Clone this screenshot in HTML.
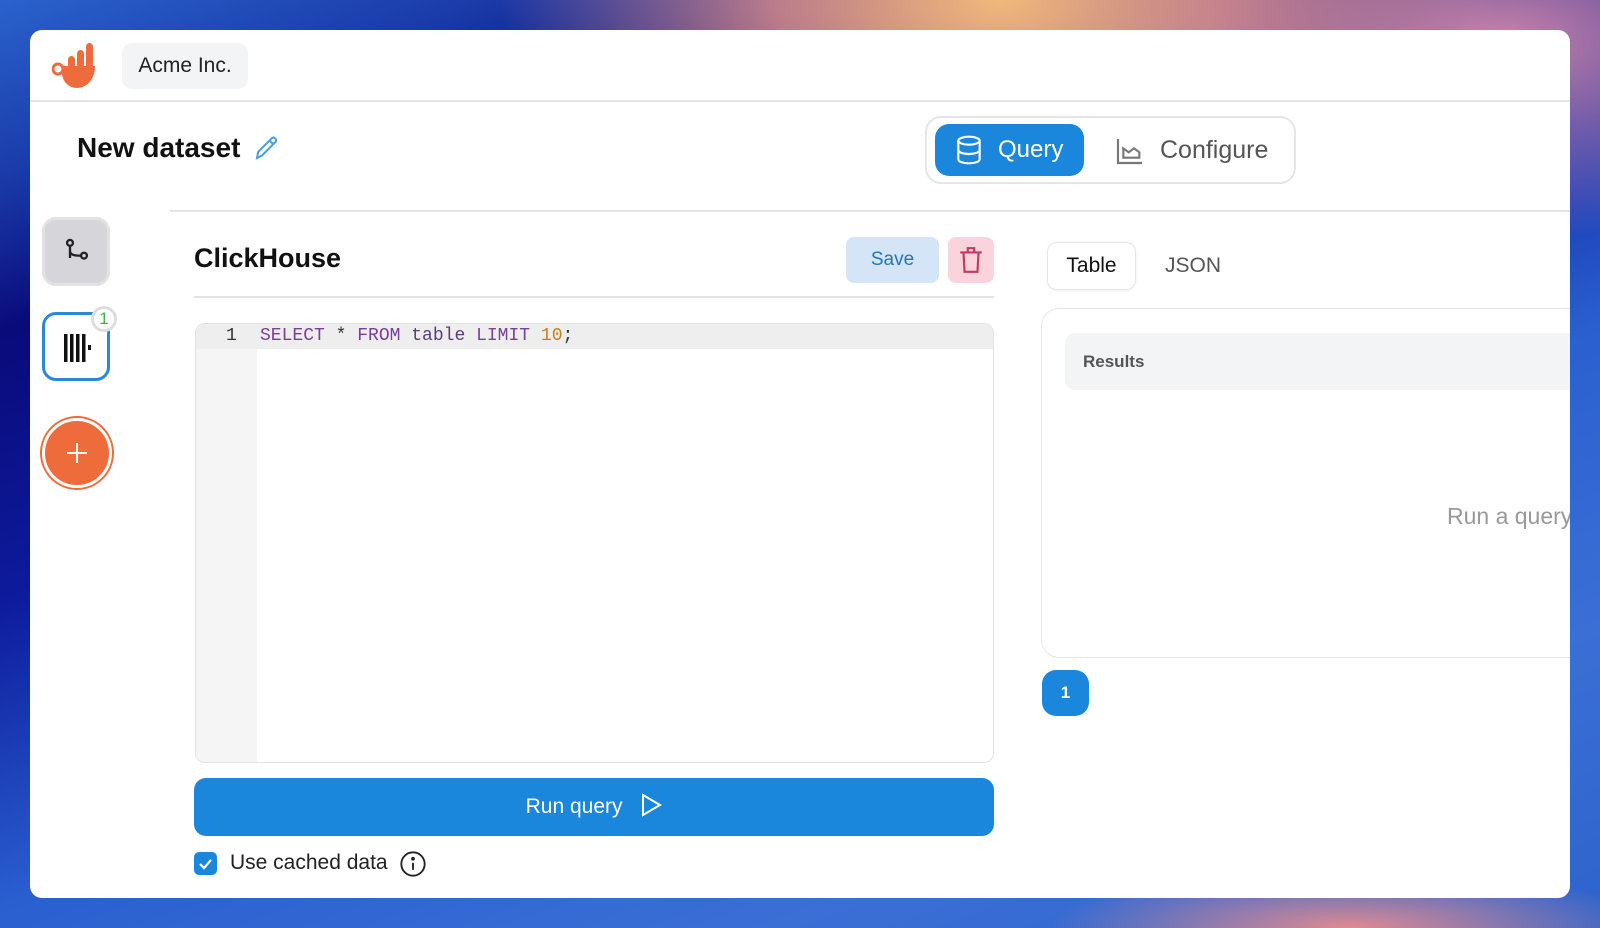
<!DOCTYPE html>
<html><head><meta charset="utf-8"><style>
*{box-sizing:border-box;margin:0;padding:0}
body{width:1600px;height:928px;overflow:hidden;position:relative;font-family:"Liberation Sans",sans-serif;
background:
radial-gradient(ellipse 500px 260px at 1000px 0px,#f1b97a 0%,rgba(230,150,140,.8) 45%,transparent 100%),
radial-gradient(ellipse 400px 200px at 1500px 40px,#c784a8 0%,transparent 100%),
radial-gradient(ellipse 300px 60px at 1350px 928px,#e08a90 0%,transparent 100%),
linear-gradient(160deg,#2a62cc 0%,#1a3aa8 12%,#0a0a7a 22%,#0d1b9c 40%,#2a5fd0 60%,#3b6fd6 80%,#2d63cc 100%);}
.win{position:absolute;left:30px;top:30px;width:1540px;height:868px;background:#fff;border-radius:12px;overflow:hidden}
.hdr{position:absolute;left:0;top:0;right:0;height:72px;border-bottom:2px solid #e5e5e7}
.pill{position:absolute;left:92px;top:13px;width:126px;height:46px;background:#f3f4f6;border-radius:10px;font-size:21px;line-height:46px;text-align:center;color:#222}
.title{position:absolute;left:47px;top:102px;font-size:28px;font-weight:bold;color:#111}
.seg{position:absolute;left:895px;top:86px;width:371px;height:68px;border:2px solid #e6e6e8;border-radius:16px}
.q{position:absolute;left:8px;top:6px;width:149px;height:52px;background:#1a86dc;border-radius:14px;color:#fff;font-size:24px;line-height:52px}
.cfg{position:absolute;left:183px;top:6px;height:52px;line-height:52px;font-size:25px;color:#555}
.hl{position:absolute;left:140px;top:180px;right:0;border-top:2px solid #e5e5e7}
.sb{position:absolute;left:12px;width:68px;height:69px;border-radius:14px}
.ch{position:absolute;left:164px;top:213px;font-size:27px;font-weight:bold;color:#111}
.save{position:absolute;left:816px;top:207px;width:93px;height:46px;background:#d3e5f7;border-radius:8px;color:#2675b8;font-size:19px;line-height:46px;text-align:center}
.trash{position:absolute;left:918px;top:207px;width:46px;height:46px;background:#fbd3dd;border-radius:8px}
.l2{position:absolute;left:164px;top:266px;width:800px;border-top:2px solid #e2e2e4}
.ed{position:absolute;left:165px;top:293px;width:799px;height:440px;border:1px solid #e2e2e4;border-radius:10px;overflow:hidden;background:#fff}
.gut{position:absolute;left:0;top:0;width:61px;height:100%;background:#f5f5f5}
.l1{position:absolute;left:0;top:0;width:100%;height:25px;background:#eeeeee;font-family:"Liberation Mono",monospace;font-size:18px;line-height:25px}
.run{position:absolute;left:164px;top:748px;width:800px;height:58px;background:#1a86dc;border-radius:12px;color:#fff;font-size:21px;text-align:center;line-height:58px}
.cb{position:absolute;left:164px;top:822px;width:23px;height:23px;background:#1a86dc;border-radius:5px}
.tab{position:absolute;left:1017px;top:212px;width:89px;height:48px;border:1px solid #e6e6e8;border-radius:10px;font-size:21px;line-height:46px;text-align:center;color:#111;box-shadow:0 1px 3px rgba(0,0,0,.06)}
.card{position:absolute;left:1011px;top:278px;width:600px;height:350px;border:1px solid #e6e6e8;border-radius:18px}
.rh{position:absolute;left:1035px;top:303px;width:600px;height:57px;background:#f3f4f6;border-radius:10px;font-size:17px;font-weight:bold;color:#555;line-height:57px;padding-left:18px}
.pg{position:absolute;left:1012px;top:640px;width:47px;height:46px;background:#1a86dc;border-radius:14px;color:#fff;font-size:17px;font-weight:bold;text-align:center;line-height:46px}
</style></head><body>
<div class="win">
<div class="hdr">
<svg style="position:absolute;left:22px;top:12px" width="46" height="48" viewBox="0 0 46 48">
<rect x="16" y="14" width="7" height="12" rx="3.5" fill="#ee6b3b"/><rect x="25" y="8" width="7" height="18" rx="3.5" fill="#ee6b3b"/><rect x="34" y="1" width="7" height="25" rx="3.5" fill="#ee6b3b"/>
<path d="M10 24 H43 C43 38 34 46 25 46 C17 46 11 40 10 32 Z" fill="#ee6b3b"/><circle cx="6" cy="27" r="5" fill="none" stroke="#ee6b3b" stroke-width="3"/></svg>
<div class="pill">Acme Inc.</div>
</div>
<div class="title">New dataset</div>
<svg style="position:absolute;left:222px;top:103px" width="30" height="30" viewBox="0 0 24 24" fill="none" stroke="#4a9ee0" stroke-width="1.6"><path d="M4 20l1-5L16 4a2.2 2.2 0 013 3L8 18z"/><path d="M14 6l3 3"/></svg>
<div class="seg">
<div class="q"><svg style="position:absolute;left:18px;top:10px" width="32" height="32" viewBox="0 0 24 24" fill="none" stroke="#fff" stroke-width="1.6"><ellipse cx="12" cy="5" rx="8" ry="3"/><path d="M4 5v14c0 1.7 3.6 3 8 3s8-1.3 8-3V5M4 12c0 1.7 3.6 3 8 3s8-1.3 8-3"/></svg><span style="position:absolute;left:63px">Query</span></div>
<svg style="position:absolute;left:187px;top:17px" width="32" height="32" viewBox="0 0 24 24" fill="none" stroke="#777" stroke-width="1.6"><path d="M3 3v18h18M7 17V10l4 3 4-3 4 3v4z"/></svg>
<div class="cfg" style="left:233px">Configure</div>
</div>
<div class="hl"></div>
<div class="sb" style="top:187px;border:3px solid #e2e2e4;background:#d6d6da"><svg style="position:absolute;left:18px;top:17px" width="28" height="28" viewBox="0 0 24 24" fill="none" stroke="#222" stroke-width="2"><circle cx="6" cy="5" r="2.5"/><circle cx="18" cy="16" r="2.5"/><path d="M6 7.5V18M6 12c0 3 3 4 9.5 4"/></svg></div>
<div class="sb" style="top:282px;border:3px solid #2a88d6;background:#fff"><svg style="position:absolute;left:17px;top:17px" width="30" height="30" viewBox="0 0 30 30" fill="#111"><rect x="2" y="2" width="3.5" height="28"/><rect x="8" y="2" width="3.5" height="28"/><rect x="14" y="2" width="3.5" height="28"/><rect x="20" y="2" width="3.5" height="28"/><rect x="26" y="13" width="3" height="5"/></svg>
<div style="position:absolute;left:46px;top:-9px;width:26px;height:26px;border-radius:50%;background:#fff;border:3px solid #ddd;color:#3bb54a;font-size:17px;text-align:center;line-height:20px">1</div></div>
<div style="position:absolute;left:12px;top:388px;width:70px;height:70px;border-radius:50%;background:#ee6b3b;border:3px solid #fff;box-shadow:0 0 0 2px #ee6b3b"><svg style="position:absolute;left:21px;top:21px" width="22" height="22" viewBox="0 0 22 22" stroke="#fff" stroke-width="2"><path d="M11 1v20M1 11h20"/></svg></div>
<div class="ch">ClickHouse</div>
<div class="save">Save</div>
<div class="trash"><svg style="position:absolute;left:10px;top:9px" width="26" height="28" viewBox="0 0 24 26" fill="none" stroke="#c23a63" stroke-width="2"><path d="M2 6h20M9 6V2h6v4M5 6l1 18h12l1-18"/></svg></div>
<div class="l2"></div>
<div class="ed"><div class="gut"></div><div class="l1"><span style="position:absolute;left:30px;color:#333">1</span><span style="position:absolute;left:64px;color:#7a3e9d">SELECT <span style="color:#333">*</span> FROM <span style="color:#5a3d7a">table</span> LIMIT <span style="color:#d07a1a">10</span><span style="color:#333">;</span></span></div></div>
<div class="run">Run query <svg style="vertical-align:-4px;margin-left:12px" width="22" height="24" viewBox="0 0 22 24" fill="none" stroke="#fff" stroke-width="2"><path d="M3 2l17 10L3 22z"/></svg></div>
<div class="cb"><svg width="23" height="23" viewBox="0 0 23 23" fill="none" stroke="#fff" stroke-width="2.2"><path d="M6 12l4 4 7-8"/></svg></div>
<div style="position:absolute;left:200px;top:821px;font-size:21px;color:#222">Use cached data</div>
<svg style="position:absolute;left:369px;top:820px" width="28" height="28" viewBox="0 0 24 24" fill="none" stroke="#222" stroke-width="1.6"><circle cx="12" cy="12" r="10"/><path d="M12 11v6"/><circle cx="12" cy="7.5" r=".8" fill="#222"/></svg>
<div class="tab">Table</div>
<div style="position:absolute;left:1135px;top:224px;font-size:21px;color:#555">JSON</div>
<div class="card"></div>
<div class="rh">Results</div>
<div style="position:absolute;left:1417px;top:473px;font-size:23px;color:#999;white-space:nowrap">Run a query</div>
<div class="pg">1</div>
</div>
</body></html>
